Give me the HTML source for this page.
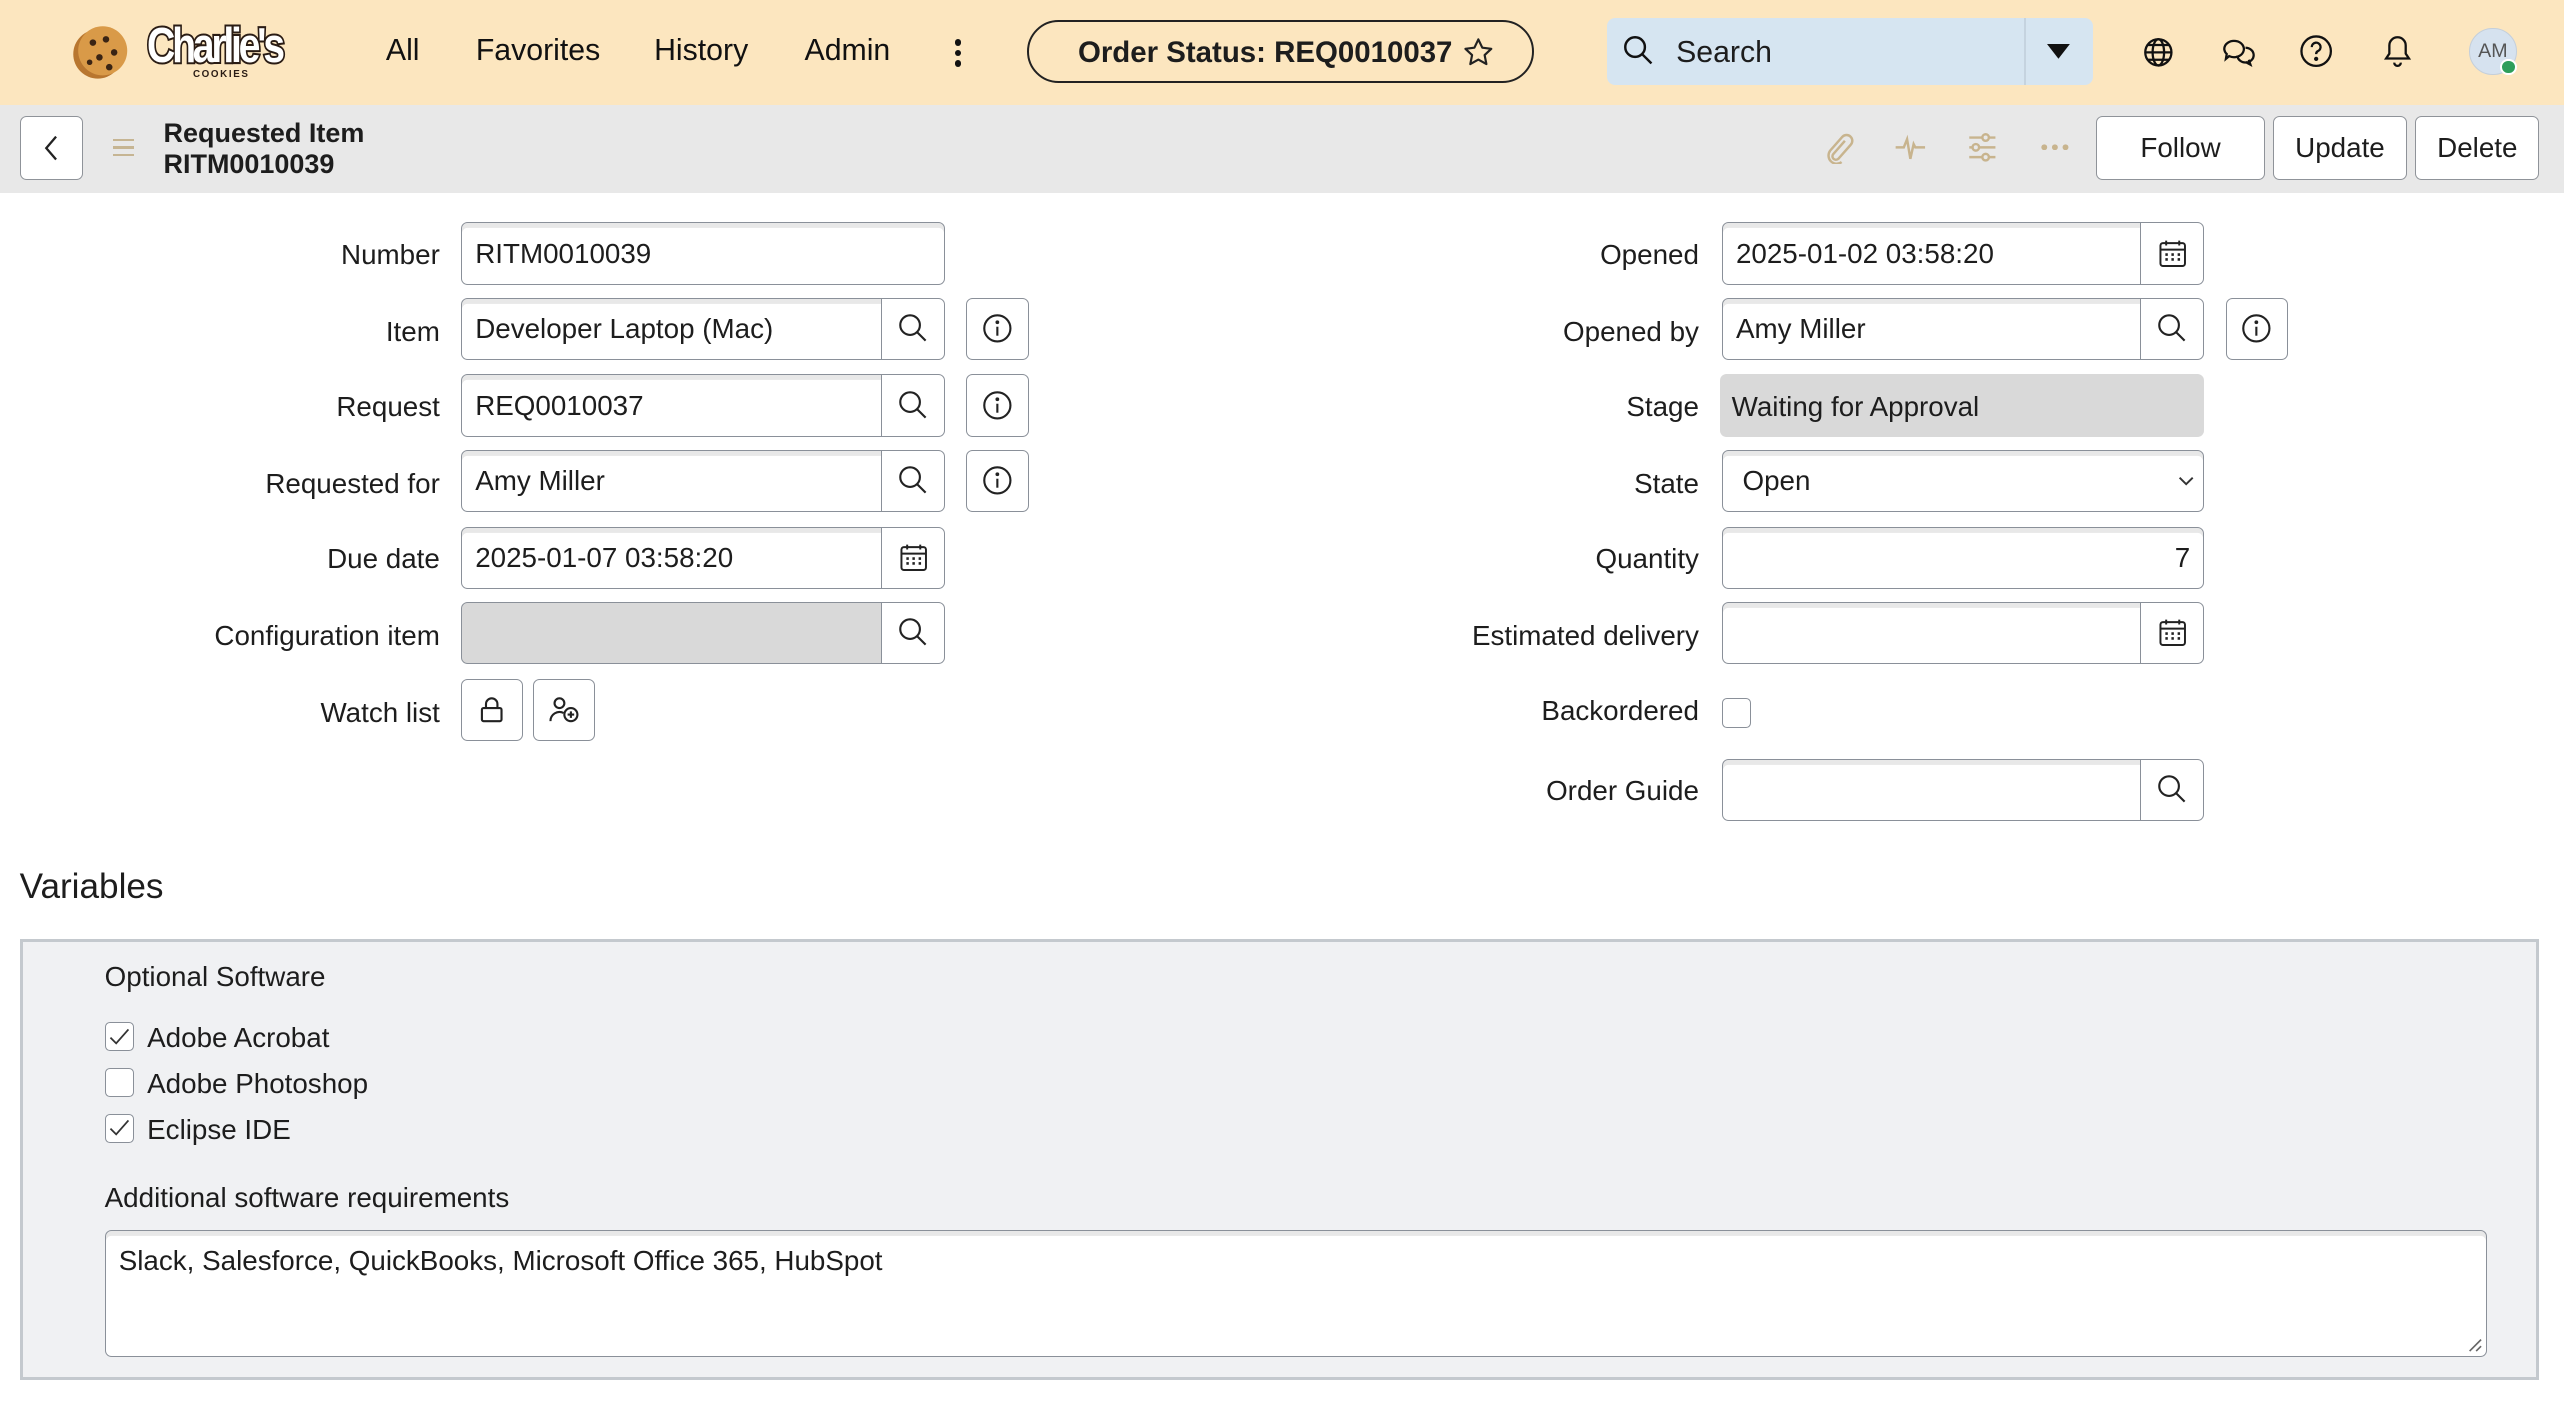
<!DOCTYPE html>
<html><head><meta charset="utf-8"><style>
*{box-sizing:border-box;margin:0;padding:0}
html,body{width:2564px;height:1426px;overflow:hidden;background:#fff}
#w{zoom:1.6352;width:1568px;height:872px;position:relative;font-family:"Liberation Sans",sans-serif;color:#1d1d1d;font-size:17px}
.a{position:absolute}
.hd{left:0;top:0;width:1568px;height:64px;background:#fce6bf}
.tb{left:0;top:64px;width:1568px;height:54px;background:#e8e8e8}
.nav{top:21px;font-size:18.5px;color:#111}
.btn{background:#fff;border:1px solid #8f9399;border-radius:4px;display:flex;align-items:center;justify-content:center;font-size:17px}
.lbl{width:260px;text-align:right;font-size:17px;line-height:20px}
.inp{background:#fff;border:1px solid #8a9099;border-radius:4px;box-shadow:inset 0 3px 0 #e8e8e8;height:38px;padding:1px 8px 0;line-height:36px;font-size:17px;overflow:hidden}
.sb{background:#fff;border:1px solid #8a9099;border-radius:0 4px 4px 0;height:38px;width:39px;display:flex;align-items:center;justify-content:center}
.ib{background:#fff;border:1px solid #8a9099;border-radius:4px;height:38px;width:38px;display:flex;align-items:center;justify-content:center}
.cb{width:18px;height:18px;border:1px solid #8a9099;border-radius:3px;background:#fff;display:flex;align-items:center;justify-content:center}
svg{display:block}
</style></head><body><div id="w">
<div class="a hd"></div>
<svg class="a" style="left:43px;top:14px" width="38" height="36" viewBox="0 0 38 36"><ellipse cx="17" cy="19" rx="15" ry="15" fill="#b8762f"/><ellipse cx="20" cy="17" rx="15" ry="15" fill="#d99a48"/><circle cx="14" cy="12" r="2" fill="#3a2414"/><circle cx="22" cy="10" r="2" fill="#3a2414"/><circle cx="27" cy="18" r="2" fill="#3a2414"/><circle cx="18" cy="21" r="2" fill="#3a2414"/><circle cx="12" cy="24" r="1.7" fill="#3a2414"/><circle cx="24" cy="27" r="2" fill="#3a2414"/></svg>
<div class="a" style="left:90px;top:11px;font-family:'Liberation Sans',sans-serif;font-weight:bold;font-size:30px;color:#fff;-webkit-text-stroke:2.5px #2a1c14;paint-order:stroke fill;letter-spacing:-2.5px;transform:scaleX(.8);transform-origin:left">Charlie's</div>
<div class="a" style="left:118px;top:42px;font-size:6px;font-weight:bold;letter-spacing:1px;color:#2a1c14">COOKIES</div>
<div class="a nav" style="left:236px">All</div>
<div class="a nav" style="left:291px">Favorites</div>
<div class="a nav" style="left:400px">History</div>
<div class="a nav" style="left:492px">Admin</div>
<div class="a" style="left:584px;top:24px;width:4px"><div style="width:4px;height:4px;border-radius:2px;background:#111;margin-bottom:2.5px"></div><div style="width:4px;height:4px;border-radius:2px;background:#111;margin-bottom:2.5px"></div><div style="width:4px;height:4px;border-radius:2px;background:#111"></div></div>
<div class="a" style="left:628px;top:12px;width:310px;height:39px;border:1.5px solid #222;border-radius:20px;font-weight:bold;font-size:18px;line-height:38px;padding-left:30px">Order Status: REQ0010037</div>
<svg class="a" style="left:894px;top:22px" width="20" height="20" viewBox="0 0 24 24"><path d="M12 2.5l2.9 6.1 6.6.8-4.9 4.6 1.3 6.6L12 17.3l-5.9 3.3 1.3-6.6-4.9-4.6 6.6-.8z" fill="none" stroke="#222" stroke-width="1.6" stroke-linejoin="round"/></svg>
<div class="a" style="left:983px;top:11px;width:297px;height:41px;background:#d6e5f1;border-radius:5px"></div>
<div class="a" style="left:1238px;top:11px;width:1px;height:41px;background:#c5d3df"></div>
<svg class="a" style="left:992px;top:21px" width="20" height="20" viewBox="0 0 20 20"><circle cx="8" cy="8" r="6" fill="none" stroke="#111" stroke-width="1.5"/><path d="M12.5 12.5l5.5 5.5" stroke="#111" stroke-width="1.5"/></svg>
<div class="a" style="left:1025px;top:22px;font-size:18.5px">Search</div>
<svg class="a" style="left:1252px;top:27px" width="14" height="10" viewBox="0 0 14 10"><path d="M0 0h14L7 9z" fill="#111"/></svg>
<svg class="a" style="left:1310px;top:22px" width="20" height="20" viewBox="0 0 20 20" fill="none" stroke="#111" stroke-width="1.4"><circle cx="10" cy="10" r="8"/><ellipse cx="10" cy="10" rx="3.5" ry="8"/><path d="M2 10h16M3.5 5.5h13M3.5 14.5h13"/></svg>
<svg class="a" style="left:1358px;top:22px" width="21" height="20" viewBox="0 0 21 20" fill="none" stroke="#111" stroke-width="1.4"><path d="M2 8a6 5 0 1 1 3 4.3L3 14l.5-3A5 5 0 0 1 2 8z"/><path d="M10 12a5 4.5 0 1 0 5-4.8M17 14.5l1 3-3-1.6"/></svg>
<svg class="a" style="left:1406px;top:21px" width="21" height="21" viewBox="0 0 21 21" fill="none" stroke="#111" stroke-width="1.4"><circle cx="10.5" cy="10.5" r="9"/><path d="M7.8 8a2.7 2.7 0 1 1 3.7 2.5c-.8.4-1 .9-1 1.8"/><circle cx="10.5" cy="15.2" r=".6" fill="#111"/></svg>
<svg class="a" style="left:1457px;top:21px" width="19" height="21" viewBox="0 0 19 21" fill="none" stroke="#111" stroke-width="1.4"><path d="M9.5 2a5 5 0 0 1 5 5v5l2 3H2.5l2-3V7a5 5 0 0 1 5-5zM7.5 17.5a2 2 0 0 0 4 0"/></svg>
<div class="a" style="left:1510px;top:17px;width:29px;height:29px;border-radius:50%;background:#d6e2ef;border:1px solid #c4cfdb;font-size:12px;color:#555;text-align:center;line-height:27px">AM</div>
<div class="a" style="left:1529px;top:36px;width:10px;height:10px;border-radius:50%;background:#2e9e5b;border:1.5px solid #fff"></div>

<div class="a tb"></div>
<div class="a btn" style="left:12px;top:71px;width:39px;height:39px"><svg width="10" height="16" viewBox="0 0 10 16"><path d="M8 1L2 8l6 7" fill="none" stroke="#222" stroke-width="1.4"/></svg></div>
<div class="a" style="left:69px;top:85px;width:13px"><div style="height:1.5px;background:#c6b593;margin-bottom:3px"></div><div style="height:1.5px;background:#c6b593;margin-bottom:3px"></div><div style="height:1.5px;background:#c6b593"></div></div>
<div class="a" style="left:100px;top:72px;font-weight:bold;font-size:16.5px;line-height:19px">Requested Item<br>RITM0010039</div>
<svg class="a" style="left:1114px;top:80px" width="20" height="20" viewBox="0 0 20 20" fill="none" stroke="#c8b48e" stroke-width="1.5"><path d="M14 6l-7 8a2 2 0 0 0 3 3l7.5-8.5a3.5 3.5 0 0 0-5-5L5 12a5 5 0 0 0 7 7"/></svg>
<svg class="a" style="left:1158px;top:80px" width="20" height="20" viewBox="0 0 20 20" fill="none" stroke="#c8b48e" stroke-width="1.5"><path d="M1 10h5l2-5 2 12 2-9 1 2h6"/></svg>
<svg class="a" style="left:1202px;top:80px" width="20" height="20" viewBox="0 0 20 20" fill="none" stroke="#c8b48e" stroke-width="1.5"><path d="M2 4h16M2 10h16M2 16h16"/><circle cx="12" cy="4" r="2" fill="#e8e8e8"/><circle cx="6" cy="10" r="2" fill="#e8e8e8"/><circle cx="12" cy="16" r="2" fill="#e8e8e8"/></svg>
<svg class="a" style="left:1248px;top:88px" width="18" height="4" viewBox="0 0 18 4" fill="#c8b48e"><circle cx="2" cy="2" r="1.8"/><circle cx="8.5" cy="2" r="1.8"/><circle cx="15" cy="2" r="1.8"/></svg>
<div class="a btn" style="left:1282px;top:71px;width:103px;height:39px">Follow</div>
<div class="a btn" style="left:1390px;top:71px;width:82px;height:39px">Update</div>
<div class="a btn" style="left:1477px;top:71px;width:76px;height:39px">Delete</div>

<div class="a lbl" style="left:9px;top:146px">Number</div>
<div class="a inp" style="left:282px;top:136px;width:296px">RITM0010039</div>
<div class="a lbl" style="left:9px;top:193px">Item</div>
<div class="a inp" style="left:282px;top:182px;width:258px;border-radius:4px 0 0 4px">Developer Laptop (Mac)</div>
<div class="a lbl" style="left:9px;top:239px">Request</div>
<div class="a inp" style="left:282px;top:229px;width:258px;border-radius:4px 0 0 4px">REQ0010037</div>
<div class="a lbl" style="left:9px;top:286px">Requested for</div>
<div class="a inp" style="left:282px;top:275px;width:258px;border-radius:4px 0 0 4px">Amy Miller</div>
<div class="a lbl" style="left:9px;top:332px">Due date</div>
<div class="a inp" style="left:282px;top:322px;width:258px;border-radius:4px 0 0 4px">2025-01-07 03:58:20</div>
<div class="a lbl" style="left:9px;top:379px">Configuration item</div>
<div class="a inp" style="left:282px;top:368px;width:258px;border-radius:4px 0 0 4px;background:#d9d9d9;box-shadow:none"></div>
<div class="a lbl" style="left:9px;top:426px">Watch list</div>
<div class="a ib" style="left:282px;top:415px"><svg width="18" height="18" viewBox="0 0 18 18" fill="none" stroke="#222" stroke-width="1.3"><rect x="3" y="8" width="12" height="8" rx="1"/><path d="M5.5 8V5.5a3.5 3.5 0 0 1 7 0V8"/></svg></div>
<div class="a ib" style="left:326px;top:415px"><svg width="20" height="18" viewBox="0 0 20 18" fill="none" stroke="#222" stroke-width="1.3"><circle cx="7" cy="5" r="3"/><path d="M1.5 16a5.5 5.5 0 0 1 8-5"/><circle cx="14" cy="12" r="4"/><path d="M14 10v4M12 12h4"/></svg></div>

<div class="a lbl" style="left:779px;top:146px">Opened</div>
<div class="a inp" style="left:1053px;top:136px;width:258px;border-radius:4px 0 0 4px">2025-01-02 03:58:20</div>
<div class="a lbl" style="left:779px;top:193px">Opened by</div>
<div class="a inp" style="left:1053px;top:182px;width:258px;border-radius:4px 0 0 4px">Amy Miller</div>
<div class="a lbl" style="left:779px;top:239px">Stage</div>
<div class="a" style="left:1052px;top:229px;width:296px;height:38px;background:#d9d9d9;border-radius:4px;padding-left:7px;line-height:40px">Waiting for Approval</div>
<div class="a lbl" style="left:779px;top:286px">State</div>
<div class="a inp" style="left:1053px;top:275px;width:295px;padding-left:12px">Open</div>
<svg class="a" style="left:1332px;top:291px" width="10" height="7" viewBox="0 0 10 7"><path d="M1 1l4 4 4-4" fill="none" stroke="#333" stroke-width="1.2"/></svg>
<div class="a lbl" style="left:779px;top:332px">Quantity</div>
<div class="a inp" style="left:1053px;top:322px;width:295px;text-align:right">7</div>
<div class="a lbl" style="left:779px;top:379px">Estimated delivery</div>
<div class="a inp" style="left:1053px;top:368px;width:258px;border-radius:4px 0 0 4px"></div>
<div class="a lbl" style="left:779px;top:425px">Backordered</div>
<div class="a cb" style="left:1053px;top:427px"></div>
<div class="a lbl" style="left:779px;top:474px">Order Guide</div>
<div class="a inp" style="left:1053px;top:464px;width:258px;border-radius:4px 0 0 4px"></div>

<div class="a sb" style="left:539px;top:182px"><svg width="20" height="20" viewBox="0 0 20 20"><circle cx="8" cy="8" r="6" fill="none" stroke="#222" stroke-width="1.3"/><path d="M12.5 12.5l5 5" stroke="#222" stroke-width="1.3"/></svg></div>
<div class="a sb" style="left:539px;top:229px"><svg width="20" height="20" viewBox="0 0 20 20"><circle cx="8" cy="8" r="6" fill="none" stroke="#222" stroke-width="1.3"/><path d="M12.5 12.5l5 5" stroke="#222" stroke-width="1.3"/></svg></div>
<div class="a sb" style="left:539px;top:275px"><svg width="20" height="20" viewBox="0 0 20 20"><circle cx="8" cy="8" r="6" fill="none" stroke="#222" stroke-width="1.3"/><path d="M12.5 12.5l5 5" stroke="#222" stroke-width="1.3"/></svg></div>
<div class="a sb" style="left:539px;top:322px"><svg width="18" height="18" viewBox="0 0 18 18" fill="none" stroke="#222" stroke-width="1.2"><rect x="1.5" y="2.5" width="15" height="14" rx="1.5"/><path d="M1.5 6.5h15M5 1v3M13 1v3"/><path d="M4.5 9.5h1.5M8.2 9.5h1.5M12 9.5h1.5M4.5 12.5h1.5M8.2 12.5h1.5M12 12.5h1.5" stroke-width="1.6"/></svg></div>
<div class="a sb" style="left:539px;top:368px"><svg width="20" height="20" viewBox="0 0 20 20"><circle cx="8" cy="8" r="6" fill="none" stroke="#222" stroke-width="1.3"/><path d="M12.5 12.5l5 5" stroke="#222" stroke-width="1.3"/></svg></div>
<div class="a sb" style="left:1309px;top:136px"><svg width="18" height="18" viewBox="0 0 18 18" fill="none" stroke="#222" stroke-width="1.2"><rect x="1.5" y="2.5" width="15" height="14" rx="1.5"/><path d="M1.5 6.5h15M5 1v3M13 1v3"/><path d="M4.5 9.5h1.5M8.2 9.5h1.5M12 9.5h1.5M4.5 12.5h1.5M8.2 12.5h1.5M12 12.5h1.5" stroke-width="1.6"/></svg></div>
<div class="a sb" style="left:1309px;top:182px"><svg width="20" height="20" viewBox="0 0 20 20"><circle cx="8" cy="8" r="6" fill="none" stroke="#222" stroke-width="1.3"/><path d="M12.5 12.5l5 5" stroke="#222" stroke-width="1.3"/></svg></div>
<div class="a sb" style="left:1309px;top:368px"><svg width="18" height="18" viewBox="0 0 18 18" fill="none" stroke="#222" stroke-width="1.2"><rect x="1.5" y="2.5" width="15" height="14" rx="1.5"/><path d="M1.5 6.5h15M5 1v3M13 1v3"/><path d="M4.5 9.5h1.5M8.2 9.5h1.5M12 9.5h1.5M4.5 12.5h1.5M8.2 12.5h1.5M12 12.5h1.5" stroke-width="1.6"/></svg></div>
<div class="a sb" style="left:1309px;top:464px"><svg width="20" height="20" viewBox="0 0 20 20"><circle cx="8" cy="8" r="6" fill="none" stroke="#222" stroke-width="1.3"/><path d="M12.5 12.5l5 5" stroke="#222" stroke-width="1.3"/></svg></div>
<div class="a ib" style="left:591px;top:182px"><svg width="20" height="20" viewBox="0 0 20 20" fill="none" stroke="#222" stroke-width="1.3"><circle cx="10" cy="10" r="8"/><path d="M10 9v5.5"/><circle cx="10" cy="6.3" r=".5" fill="#222"/></svg></div>
<div class="a ib" style="left:591px;top:229px"><svg width="20" height="20" viewBox="0 0 20 20" fill="none" stroke="#222" stroke-width="1.3"><circle cx="10" cy="10" r="8"/><path d="M10 9v5.5"/><circle cx="10" cy="6.3" r=".5" fill="#222"/></svg></div>
<div class="a ib" style="left:591px;top:275px"><svg width="20" height="20" viewBox="0 0 20 20" fill="none" stroke="#222" stroke-width="1.3"><circle cx="10" cy="10" r="8"/><path d="M10 9v5.5"/><circle cx="10" cy="6.3" r=".5" fill="#222"/></svg></div>
<div class="a ib" style="left:1361px;top:182px"><svg width="20" height="20" viewBox="0 0 20 20" fill="none" stroke="#222" stroke-width="1.3"><circle cx="10" cy="10" r="8"/><path d="M10 9v5.5"/><circle cx="10" cy="6.3" r=".5" fill="#222"/></svg></div>

<div class="a" style="left:12px;top:530px;font-size:21.5px">Variables</div>
<div class="a" style="left:12px;top:574px;width:1541px;height:270px;background:#f0f1f3;border:2px solid #c4c9ce"></div>
<div class="a" style="left:64px;top:588px">Optional Software</div>
<div class="a cb" style="left:64px;top:625px"><svg width="14" height="12" viewBox="0 0 14 12"><path d="M1.5 6.5l3.5 3.5L12.5 1.5" fill="none" stroke="#333" stroke-width="1.1"/></svg></div>
<div class="a" style="left:90px;top:625px">Adobe Acrobat</div>
<div class="a cb" style="left:64px;top:653px"></div>
<div class="a" style="left:90px;top:653px">Adobe Photoshop</div>
<div class="a cb" style="left:64px;top:681px"><svg width="14" height="12" viewBox="0 0 14 12"><path d="M1.5 6.5l3.5 3.5L12.5 1.5" fill="none" stroke="#333" stroke-width="1.1"/></svg></div>
<div class="a" style="left:90px;top:681px">Eclipse IDE</div>
<div class="a" style="left:64px;top:723px">Additional software requirements</div>
<div class="a" style="left:64px;top:752px;width:1457px;height:78px;background:#fff;border:1px solid #8a9099;border-radius:4px;box-shadow:inset 0 3px 0 #e8e8e8;padding:9px 8px">Slack, Salesforce, QuickBooks, Microsoft Office 365, HubSpot</div>
<svg class="a" style="left:1509px;top:818px" width="9" height="9" viewBox="0 0 9 9"><path d="M8 1L1 8M8 5L5 8" stroke="#666" stroke-width="1"/></svg>
</div></body></html>
